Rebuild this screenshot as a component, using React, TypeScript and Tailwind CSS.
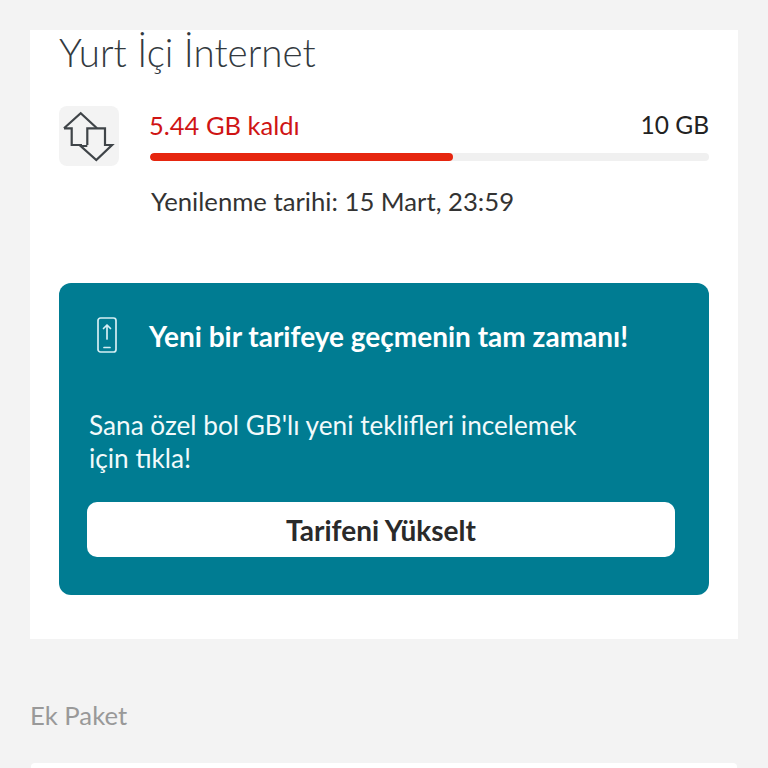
import React from "react";

const font = { fontFamily: '"Lato", "Noto Sans", sans-serif' };

function DataIcon() {
  return (
    <svg width="60" height="60" viewBox="0 0 60 60" fill="none" stroke="#3f4448" strokeWidth="2.2" strokeLinejoin="miter">
      <path d="M5 22.3 L21.7 7.3 L38 22.3 M5 22.3 H12.7 V39 H23" />
      <path d="M28.3 39 V22.3 H46 V39 H53 L37.3 54 L21.7 40 H28.3" />
    </svg>
  );
}

function PhoneUpIcon() {
  return (
    <svg width="20" height="36" viewBox="0 0 20 36" fill="none" stroke="#d4eef4" strokeWidth="1.7" strokeLinecap="round" strokeLinejoin="round" className="shrink-0">
      <rect x="1" y="1" width="18" height="34" rx="2.5" />
      <path d="M10 22 V8 M6.5 11.5 L10 8 L13.5 11.5" />
      <path d="M7 30.5 H13" />
    </svg>
  );
}

export default function App() {
  return (
    <div className="w-[768px] h-[768px] overflow-hidden bg-[#f3f3f3] pt-[30px] px-[30px]" style={font}>
      <div className="w-[708px] h-[609px] bg-white px-[29px]">
        <h1 className="text-[38.5px] leading-[44px] font-light text-[#333a3f]">Yurt İçi İnternet</h1>

        <div className="flex mt-[32px] h-[177px]">
          <div className="w-[60px] h-[60px] rounded-lg bg-[#f3f3f3] shrink-0">
            <DataIcon />
          </div>
          <div className="flex-1 ml-[31px]">
            <div className="flex justify-between items-center h-[38px]">
              <span className="text-[25.5px] text-[#cf1414] -ml-[1px]">5.44 GB kaldı</span>
              <span className="text-[24.5px] text-[#222]">10 GB</span>
            </div>
            <div className="h-[8px] mt-[9px] rounded-full bg-[#f0f0f0] overflow-hidden">
              <div className="h-full w-[303px] rounded-full bg-[#e6260f]" />
            </div>
            <p className="mt-[23px] ml-[1px] text-[25.7px] leading-[34px] text-[#333]">Yenilenme tarihi: 15 Mart, 23:59</p>
          </div>
        </div>

        <div className="h-[312px] rounded-xl bg-[#007c92] px-[28px] pt-[34px] text-white">
          <div className="flex items-start ml-[10px]">
            <PhoneUpIcon />
            <span className="ml-[32px] text-[28px] leading-[38px] font-bold">Yeni bir tarifeye geçmenin tam zamanı!</span>
          </div>
          <p className="mt-[54px] ml-[2px] text-[26.2px] leading-[33px] text-[#f2fafb] w-[520px]">
            Sana özel bol GB'lı yeni teklifleri incelemek için tıkla!
          </p>
          <button className="mt-[27px] w-[588px] h-[55px] rounded-[10px] bg-white text-[28px] font-bold text-[#2a2a2a]">
            Tarifeni Yükselt
          </button>
        </div>
      </div>

      <p className="mt-[58px] text-[25.7px] leading-[36px] text-[#999]">Ek Paket</p>
      <div className="mt-[30px] h-[40px] w-[706px] ml-[1px] rounded-t bg-white" />
    </div>
  );
}
